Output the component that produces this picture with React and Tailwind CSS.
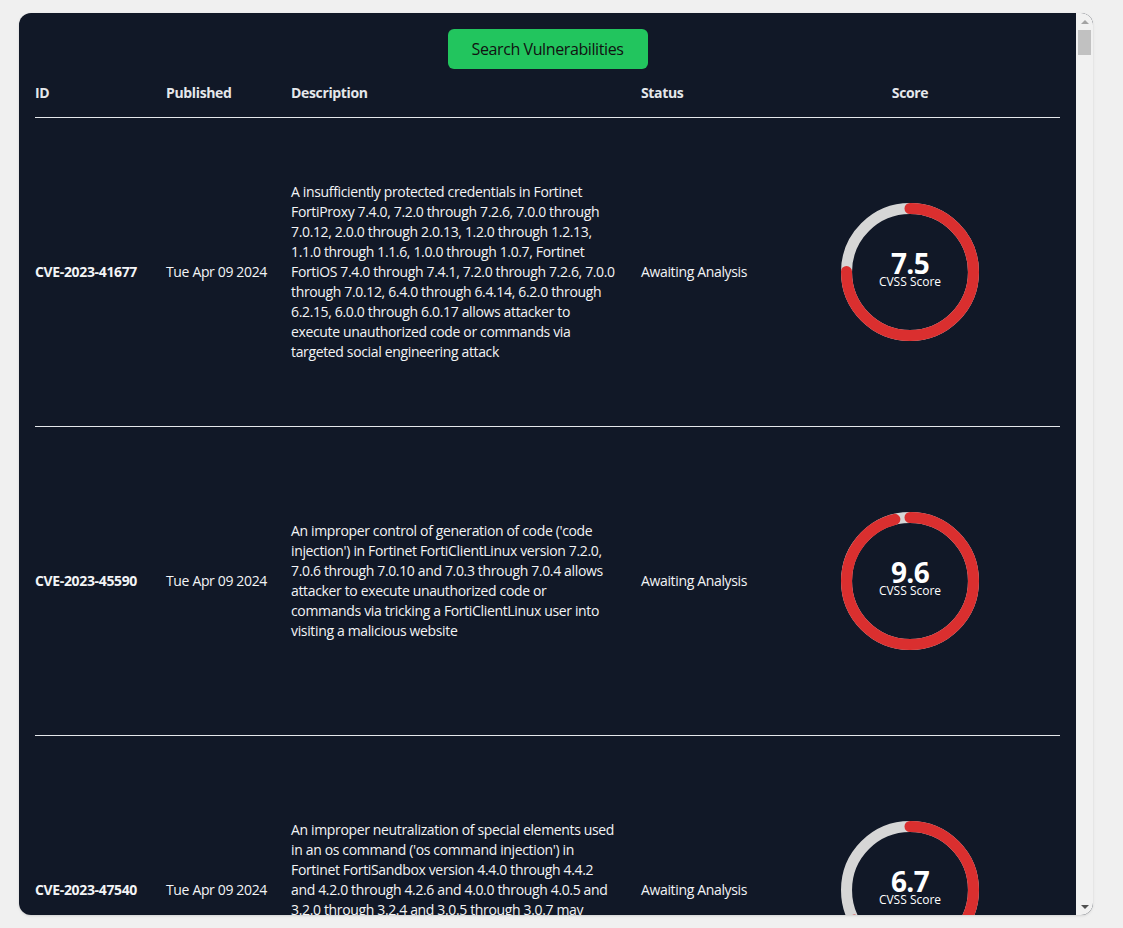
import React from "react";

const ROWS = [
  {
    id: "CVE-2023-41677",
    date: "Tue Apr 09 2024",
    desc: "A insufficiently protected credentials in Fortinet FortiProxy 7.4.0, 7.2.0 through 7.2.6, 7.0.0 through 7.0.12, 2.0.0 through 2.0.13, 1.2.0 through 1.2.13, 1.1.0 through 1.1.6, 1.0.0 through 1.0.7, Fortinet FortiOS 7.4.0 through 7.4.1, 7.2.0 through 7.2.6, 7.0.0 through 7.0.12, 6.4.0 through 6.4.14, 6.2.0 through 6.2.15, 6.0.0 through 6.0.17 allows attacker to execute unauthorized code or commands via targeted social engineering attack",
    status: "Awaiting Analysis",
    score: 7.5,
  },
  {
    id: "CVE-2023-45590",
    date: "Tue Apr 09 2024",
    desc: "An improper control of generation of code ('code injection') in Fortinet FortiClientLinux version 7.2.0, 7.0.6 through 7.0.10 and 7.0.3 through 7.0.4 allows attacker to execute unauthorized code or commands via tricking a FortiClientLinux user into visiting a malicious website",
    status: "Awaiting Analysis",
    score: 9.6,
  },
  {
    id: "CVE-2023-47540",
    date: "Tue Apr 09 2024",
    desc: "An improper neutralization of special elements used in an os command ('os command injection') in Fortinet FortiSandbox version 4.4.0 through 4.4.2 and 4.2.0 through 4.2.6 and 4.0.0 through 4.0.5 and 3.2.0 through 3.2.4 and 3.0.5 through 3.0.7 may allows attacker to execute unauthorized code or commands via crafted HTTP requests.",
    status: "Awaiting Analysis",
    score: 6.7,
  },
];

function ScoreRing({ score }) {
  const r = 46;
  const c = 2 * Math.PI * r;
  const pct = score / 10;
  return (
    <div className="relative w-[138px] h-[138px]">
      <svg viewBox="0 0 100 100" className="w-full h-full">
        <circle cx="50" cy="50" r={r} fill="none" stroke="#d6d6d6" strokeWidth="8" />
        <circle
          cx="50"
          cy="50"
          r={r}
          fill="none"
          stroke="#da2f2f"
          strokeWidth="8"
          strokeLinecap="round"
          strokeDasharray={c}
          strokeDashoffset={c * (1 - pct)}
          transform="rotate(-90 50 50)"
        />
      </svg>
      <div className="absolute inset-0 flex flex-col items-center justify-center pb-[2px] text-white">
        <span className="text-[28px] font-bold leading-[22px] tracking-tight">{score.toFixed(1)}</span>
        <span className="text-xs leading-4 tracking-normal">CVSS Score</span>
      </div>
    </div>
  );
}

function Scrollbar() {
  return (
    <div className="w-[17px] shrink-0 bg-[#f1f1f1] flex flex-col">
      <div className="h-[17px] flex items-center justify-center">
        <svg width="8" height="4" viewBox="0 0 8 4">
          <polygon points="0,4 8,4 4,0" fill="#a3a3a3" />
        </svg>
      </div>
      <div className="flex-1 px-[2px]">
        <div className="h-[25px] bg-[#c1c1c1]" />
      </div>
      <div className="h-[17px] flex items-center justify-center">
        <svg width="8" height="4" viewBox="0 0 8 4">
          <polygon points="0,0 8,0 4,4" fill="#505050" />
        </svg>
      </div>
    </div>
  );
}

export default function App() {
  return (
    <div className="min-h-screen bg-[#f0f0f0] pt-[13px] pl-[19px] font-['Open_Sans',sans-serif]">
      <div className="w-[1074px] h-[902px] flex overflow-hidden rounded-xl bg-[#111827] shadow text-[#f3f4f6]">
        <div className="flex-1 overflow-hidden p-4">
          <div className="flex justify-center">
            <button className="w-[200px] h-10 rounded-md bg-[#22c55e] text-[#111111] text-base tracking-tight">
              Search Vulnerabilities
            </button>
          </div>
          <div className="grid grid-cols-[131px_125px_350px_119px_1fr] h-[49px] items-center border-b border-[#e5e7eb] text-sm font-bold tracking-tight text-[#e5e7eb]">
            <div>ID</div>
            <div>Published</div>
            <div>Description</div>
            <div>Status</div>
            <div className="text-center">Score</div>
          </div>
          {ROWS.map((row) => (
            <div
              key={row.id}
              className="grid grid-cols-[131px_125px_350px_119px_1fr] h-[309px] items-center border-b border-[#e5e7eb] text-sm tracking-tight"
            >
              <div className="font-bold">{row.id}</div>
              <div>{row.date}</div>
              <div className="w-[324px] leading-5">{row.desc}</div>
              <div>{row.status}</div>
              <div className="flex justify-center">
                <ScoreRing score={row.score} />
              </div>
            </div>
          ))}
        </div>
        <Scrollbar />
      </div>
    </div>
  );
}
